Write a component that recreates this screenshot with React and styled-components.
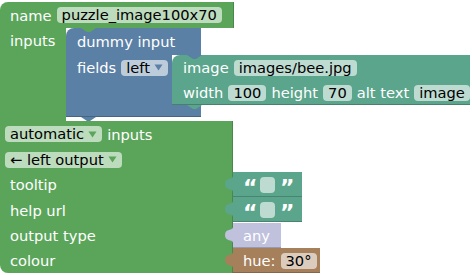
import React from 'react'
import styled, { createGlobalStyle } from 'styled-components'

const GREEN = '#5ba55b'
const BLUE = '#5b80a5'
const TEAL = '#5ba58c'
const LAVENDER = '#c0c1dd'
const BROWN = '#a5805b'

const fieldBg = {
  [GREEN]: '#bddbbd',
  [BLUE]: '#bdccdb',
  [TEAL]: '#bddbd1',
  [BROWN]: '#dbccbd',
}

const GlobalStyle = createGlobalStyle`
  html, body {
    margin: 0;
    background: #fff;
  }
  body {
    font-family: 'DejaVu Sans', 'Liberation Sans', sans-serif;
    font-size: 14.67px;
  }
`

const Canvas = styled.div`
  width: 472px;
  height: 275px;
  overflow: hidden;
  padding-top: 2px;
  box-sizing: border-box;
`
const Block = styled.div`
  position: relative;
  display: flex;
  flex-direction: column;
  align-items: flex-start;
`
const Row = styled.div`
  display: flex;
  align-items: center;
  gap: 5px;
  width: ${p => p.$w}px;
  height: ${p => p.$h || 25}px;
  padding-left: ${p => (p.$pl === undefined ? 10 : p.$pl)}px;
  box-sizing: border-box;
  background: ${p => p.$color};
  color: #fff;
  white-space: nowrap;
  border-top-left-radius: ${p => (p.$top ? 8 : 0)}px;
  border-bottom-left-radius: ${p => (p.$end ? 8 : 0)}px;
  box-shadow: ${p => (p.$shade ? 'inset 0 -1px 0 rgba(0,0,0,0.22)' : 'none')};
`
const Body = styled(Row)`
  box-shadow: inset -1px 0 0 rgba(0, 0, 0, 0.18);
`
const Statement = styled.div`
  display: flex;
  align-items: stretch;
`
const Arm = styled.div`
  width: ${p => p.$w}px;
  padding-left: ${p => (p.$pl === undefined ? 10 : p.$pl)}px;
  box-sizing: border-box;
  background: ${p => p.$color};
  color: #fff;
`
const Line = styled.div`
  display: flex;
  align-items: center;
  gap: 5px;
  height: 25px;
  white-space: nowrap;
`
const Slot = styled.div`
  padding-bottom: ${p => p.$pb || 0}px;
`
const Notch = styled.div`
  position: absolute;
  left: 15px;
  width: 15px;
  height: 4px;
  background: ${p => p.$color};
  clip-path: polygon(0 0, 100% 0, 60% 100%, 40% 100%);
  ${p => (p.$bottom ? 'bottom: -4px;' : 'top: 0;')}
`
const Field = styled.span`
  display: inline-flex;
  align-items: center;
  gap: 4px;
  height: 16px;
  line-height: 16px;
  padding: 0 5px;
  border-radius: 4px;
  background: ${p => fieldBg[p.$color]};
  color: #000;
`
const Empty = styled.span`
  display: inline-block;
  width: 15px;
  height: 16px;
  border-radius: 4px;
  background: ${fieldBg[TEAL]};
`
const Quote = styled.span`
  display: inline-block;
  width: 12px;
  padding-top: 7px;
  line-height: 1;
  text-align: center;
  font-weight: bold;
  font-size: 22px;
  color: #fff;
`
const InputRow = styled.div`
  display: flex;
  align-items: flex-start;
`
const Value = styled.div`
  position: relative;
  display: flex;
  align-items: center;
  gap: 5px;
  width: ${p => p.$w}px;
  height: ${p => p.$h || 25}px;
  padding-left: 10px;
  box-sizing: border-box;
  background: ${p => p.$color};
  color: #fff;
  white-space: nowrap;
  box-shadow: inset 0 -1px 0 rgba(0, 0, 0, 0.2);
`
const Tab = styled.svg`
  position: absolute;
  left: -8px;
  top: 4px;
`

const Arrow = ({ color }) => (
  <svg width="9" height="7" viewBox="0 0 9 7">
    <path d="M0.5 0.5 H8.5 L4.5 6.5 Z" fill={color} />
  </svg>
)

const Plug = ({ color }) => (
  <Tab width="9" height="16" viewBox="0 0 9 16">
    <path d="M9,0 H8 C8,4 0,1 0,8 C0,15 8,12 8,16 H9 Z" fill={color} />
  </Tab>
)

const TextValue = () => (
  <Value $color={TEAL} $w={69}>
    <Plug color={TEAL} />
    <Quote>“</Quote>
    <Empty />
    <Quote>”</Quote>
  </Value>
)

export default function App() {
  return (
    <>
      <GlobalStyle />
      <Canvas>
        <Block>
          <Body $color={GREEN} $w={234} $h={26} $top>
            name
            <Field $color={GREEN}>puzzle_image100x70</Field>
          </Body>
          <Statement>
            <Arm $color={GREEN} $w={66}>
              <Line>inputs</Line>
            </Arm>
            <Slot $pb={4}>
              <Block>
                <Row $color={BLUE} $w={135} $h={27} $pl={11} $top>
                  dummy input
                </Row>
                <Notch $color={GREEN} />
                <Statement>
                  <Arm $color={BLUE} $w={106} $pl={11}>
                    <Line>
                      fields
                      <Field $color={BLUE}>
                        left
                        <Arrow color={BLUE} />
                      </Field>
                    </Line>
                  </Arm>
                  <Slot>
                    <Block>
                      <Row $color={TEAL} $w={298} $pl={11} $top>
                        image
                        <Field $color={TEAL}>images/bee.jpg</Field>
                      </Row>
                      <Row $color={TEAL} $w={298} $pl={11} $shade>
                        width
                        <Field $color={TEAL}>100</Field>
                        height
                        <Field $color={TEAL}>70</Field>
                        alt text
                        <Field $color={TEAL}>image</Field>
                      </Row>
                      <Notch $color={BLUE} />
                      <Notch $color={TEAL} $bottom />
                    </Block>
                  </Slot>
                </Statement>
                <Row $color={BLUE} $w={135} $h={12} $shade />
                <Notch $color={BLUE} $bottom />
              </Block>
            </Slot>
          </Statement>
          <Body $color={GREEN} $w={233} $h={26} $pl={5}>
            <Field $color={GREEN}>
              automatic
              <Arrow color={GREEN} />
            </Field>
            inputs
          </Body>
          <Body $color={GREEN} $w={233} $pl={5}>
            <Field $color={GREEN}>
              ← left output
              <Arrow color={GREEN} />
            </Field>
          </Body>
          <InputRow>
            <Body $color={GREEN} $w={233}>tooltip</Body>
            <TextValue />
          </InputRow>
          <InputRow>
            <Body $color={GREEN} $w={233} $h={26}>help url</Body>
            <TextValue />
          </InputRow>
          <InputRow>
            <Body $color={GREEN} $w={233}>output type</Body>
            <Value $color={LAVENDER} $w={48}>
              <Plug color={LAVENDER} />
              any
            </Value>
          </InputRow>
          <InputRow>
            <Body $color={GREEN} $w={233} $end>colour</Body>
            <Value $color={BROWN} $w={87}>
              <Plug color={BROWN} />
              hue:
              <Field $color={BROWN}>30°</Field>
            </Value>
          </InputRow>
        </Block>
      </Canvas>
    </>
  )
}
